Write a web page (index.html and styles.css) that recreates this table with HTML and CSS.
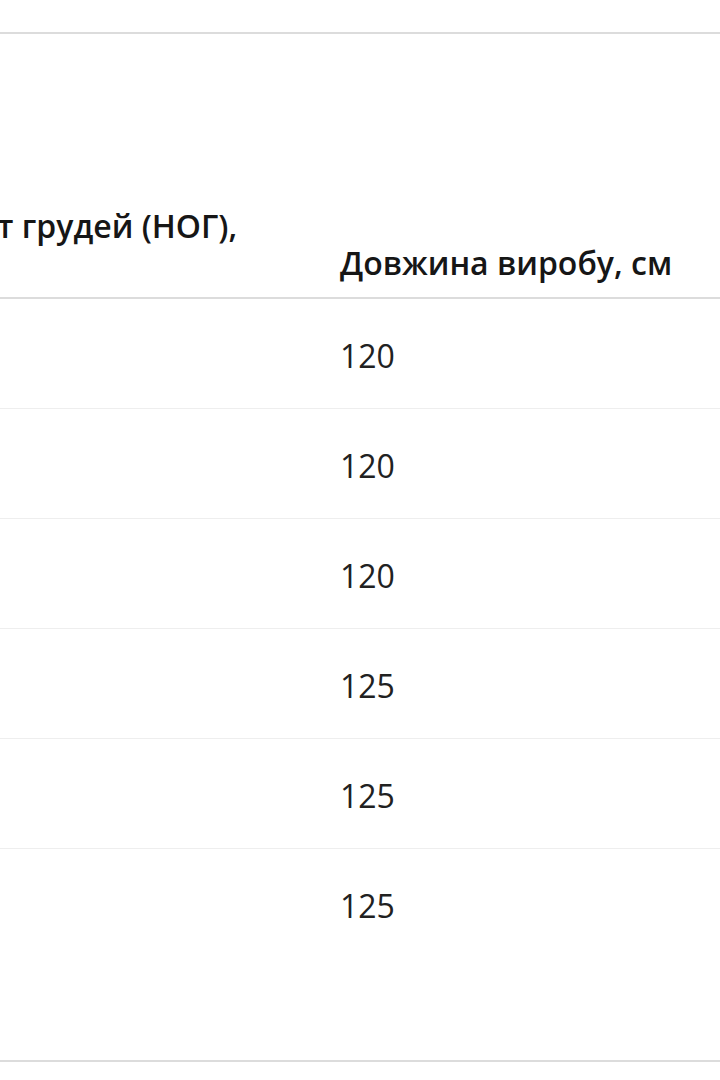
FILE: index.html
```html
<!DOCTYPE html>
<html lang="uk">
<head>
<meta charset="utf-8">
<title>Таблиця розмірів</title>
<link rel="stylesheet" href="styles.css">
</head>
<body>
<div class="frame">
  <table class="sizes">
    <colgroup>
      <col class="c1">
      <col class="c2">
      <col class="c3">
    </colgroup>
    <thead>
      <tr>
        <th class="first">Обхват грудей (НОГ), см</th>
        <th>Довжина виробу, см</th>
        <th></th>
      </tr>
    </thead>
    <tbody>
      <tr><td class="first">96</td><td>120</td><td></td></tr>
      <tr><td class="first">100</td><td>120</td><td></td></tr>
      <tr><td class="first">104</td><td>120</td><td></td></tr>
      <tr><td class="first">108</td><td>125</td><td></td></tr>
      <tr><td class="first">112</td><td>125</td><td></td></tr>
      <tr class="last"><td class="first">116</td><td>125</td><td></td></tr>
    </tbody>
  </table>
</div>
</body>
</html>
```

FILE: styles.css
```css
html, body {
  margin: 0;
  padding: 0;
  background: #ffffff;
  overflow: hidden;
}
body {
  width: 720px;
  height: 1080px;
  font-family: "Open Sans", "Noto Sans", sans-serif;
  color: #212121;
}
.frame {
  margin-top: 32px;
  border-top: 2px solid #dcdcdc;
  border-bottom: 2px solid #dcdcdc;
  height: 1026px;
  overflow: hidden;
}
.sizes {
  margin-left: -115px;
  border-collapse: collapse;
  table-layout: fixed;
  width: 1200px;
}
.c1 { width: 443px; }
.c2 { width: 420px; }
.c3 { width: 337px; }
.sizes th {
  height: 246px;
  vertical-align: bottom;
  text-align: left;
  font-weight: 600;
  font-size: 32px;
  line-height: 37px;
  padding: 0 12px 16px 12px;
  border-bottom: 2px solid #dcdcdc;
  color: #161616;
}
.sizes th.first {
  line-height: 36px;
  padding-bottom: 17px;
}
.sizes th.first,
.sizes td.first {
  padding-right: 78px;
}
.sizes td {
  height: 105px;
  padding: 4px 12px 0 12px;
  font-size: 32px;
  font-weight: 400;
  vertical-align: middle;
  border-bottom: 1px solid #eeeeee;
}
.sizes tr.last td {
  border-bottom: none;
}
```
